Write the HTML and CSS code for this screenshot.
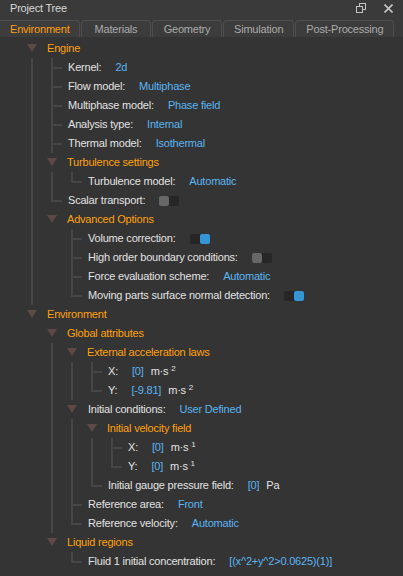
FILE: index.html
```html
<!DOCTYPE html>
<html>
<head>
<meta charset="utf-8">
<link rel="stylesheet" href="styles.css">
</head>
<body>
<div class="panel">
  <div class="titlebar">
    <span class="title">Project Tree</span>
    <div class="tools">
      <svg class="ico-float" width="10" height="10" viewBox="0 0 10 10"><rect x="3.5" y="0.5" width="6" height="6" fill="none" stroke="#c4c4c4"/><rect x="0.5" y="3.5" width="6" height="6" fill="#3a3a3a" stroke="#c4c4c4"/></svg>
      <svg class="ico-close" width="9" height="9" viewBox="0 0 9 9"><path d="M0.5 0.5 L8.5 8.5 M8.5 0.5 L0.5 8.5" stroke="#c4c4c4" stroke-width="1.6"/></svg>
    </div>
  </div>
  <div class="tabbar">
    <div class="tab active">Environment</div>
    <div class="tab">Materials</div>
    <div class="tab">Geometry</div>
    <div class="tab">Simulation</div>
    <div class="tab">Post-Processing</div>
  </div>
  <div class="tree">
    <div class="row"><i class="c a"></i><span class="grp">Engine</span></div>
    <div class="row"><i class="c v"></i><i class="c t"></i><span class="lbl">Kernel:</span><span class="val">2d</span></div>
    <div class="row"><i class="c v"></i><i class="c t"></i><span class="lbl">Flow model:</span><span class="val">Multiphase</span></div>
    <div class="row"><i class="c v"></i><i class="c t"></i><span class="lbl">Multiphase model:</span><span class="val">Phase field</span></div>
    <div class="row"><i class="c v"></i><i class="c t"></i><span class="lbl">Analysis type:</span><span class="val">Internal</span></div>
    <div class="row"><i class="c v"></i><i class="c t"></i><span class="lbl">Thermal model:</span><span class="val">Isothermal</span></div>
    <div class="row"><i class="c v"></i><i class="c a"></i><span class="grp">Turbulence settings</span></div>
    <div class="row"><i class="c v"></i><i class="c v"></i><i class="c e"></i><span class="lbl">Turbulence model:</span><span class="val">Automatic</span></div>
    <div class="row"><i class="c v"></i><i class="c e"></i><span class="lbl">Scalar transport:</span><span class="tg off"></span></div>
    <div class="row"><i class="c v"></i><i class="c a"></i><span class="grp">Advanced Options</span></div>
    <div class="row"><i class="c v"></i><i class="c"></i><i class="c t"></i><span class="lbl">Volume correction:</span><span class="tg on"></span></div>
    <div class="row"><i class="c v"></i><i class="c"></i><i class="c t"></i><span class="lbl">High order boundary conditions:</span><span class="tg off"></span></div>
    <div class="row"><i class="c v"></i><i class="c"></i><i class="c t"></i><span class="lbl">Force evaluation scheme:</span><span class="val">Automatic</span></div>
    <div class="row"><i class="c v"></i><i class="c"></i><i class="c e"></i><span class="lbl">Moving parts surface normal detection:</span><span class="tg on"></span></div>
    <div class="row"><i class="c a"></i><span class="grp">Environment</span></div>
    <div class="row"><i class="c"></i><i class="c a"></i><span class="grp">Global attributes</span></div>
    <div class="row"><i class="c"></i><i class="c v"></i><i class="c a"></i><span class="grp">External acceleration laws</span></div>
    <div class="row"><i class="c"></i><i class="c v"></i><i class="c v"></i><i class="c t"></i><span class="lbl">X:</span><span class="val">[0]</span><span class="unit">m·s<sup class="exp"><b class="neg">-</b>2</sup></span></div>
    <div class="row"><i class="c"></i><i class="c v"></i><i class="c v"></i><i class="c e"></i><span class="lbl">Y:</span><span class="val">[-9.81]</span><span class="unit">m·s<sup class="exp"><b class="neg">-</b>2</sup></span></div>
    <div class="row"><i class="c"></i><i class="c v"></i><i class="c a"></i><span class="lbl">Initial conditions:</span><span class="val">User Defined</span></div>
    <div class="row"><i class="c"></i><i class="c v"></i><i class="c v"></i><i class="c a"></i><span class="grp">Initial velocity field</span></div>
    <div class="row"><i class="c"></i><i class="c v"></i><i class="c v"></i><i class="c v"></i><i class="c t"></i><span class="lbl">X:</span><span class="val">[0]</span><span class="unit">m·s<sup class="exp"><b class="neg">-</b>1</sup></span></div>
    <div class="row"><i class="c"></i><i class="c v"></i><i class="c v"></i><i class="c v"></i><i class="c e"></i><span class="lbl">Y:</span><span class="val">[0]</span><span class="unit">m·s<sup class="exp"><b class="neg">-</b>1</sup></span></div>
    <div class="row"><i class="c"></i><i class="c v"></i><i class="c v"></i><i class="c e"></i><span class="lbl">Initial gauge pressure field:</span><span class="val">[0]</span><span class="unit">Pa</span></div>
    <div class="row"><i class="c"></i><i class="c v"></i><i class="c t"></i><span class="lbl">Reference area:</span><span class="val">Front</span></div>
    <div class="row"><i class="c"></i><i class="c v"></i><i class="c e"></i><span class="lbl">Reference velocity:</span><span class="val">Automatic</span></div>
    <div class="row"><i class="c"></i><i class="c a"></i><span class="grp">Liquid regions</span></div>
    <div class="row"><i class="c"></i><i class="c"></i><i class="c e"></i><span class="lbl">Fluid 1 initial concentration:</span><span class="val">[(x^2+y^2&gt;0.0625)(1)]</span></div>
  </div>
</div>
</body>
</html>
```

FILE: styles.css
```css
html, body {
  margin: 0;
  padding: 0;
  background: #343434;
}
body {
  width: 403px;
  height: 576px;
  overflow: hidden;
  font-family: "Liberation Sans", Arial, sans-serif;
  font-size: 11px;
  letter-spacing: -0.2px;
  color: #e2e2e2;
}
.panel {
  display: flex;
  flex-direction: column;
  height: 576px;
}
.titlebar {
  height: 16px;
  line-height: 16px;
  background: #3a3a3a;
  display: flex;
  align-items: center;
  justify-content: space-between;
  padding: 0 10px;
}
.title {
  color: #d8d8d8;
}
.tools {
  display: flex;
  align-items: center;
  gap: 18px;
}
.ico-float {
  display: block;
}
.ico-close {
  display: block;
  margin-top: 1px;
}
.tabbar {
  background: #3a3a3a;
  padding-top: 4px;
  display: flex;
  gap: 1px;
  height: 17px;
}
.tab {
  box-sizing: border-box;
  height: 17px;
  line-height: 16px;
  min-width: 70px;
  padding: 0 10px;
  text-align: center;
  color: #ababab;
  background: #3c3c3c;
  border: 1px solid #4e4e4e;
  border-bottom: none;
  border-radius: 4px 4px 0 0;
}
.tab.active {
  color: #ff9f0a;
  background: #3d3d3d;
  border-left: none;
  border-top-left-radius: 0;
  width: 80px;
}
.tree {
  padding: 2px 0 0 22px;
}
.row {
  display: flex;
  align-items: center;
  height: 19px;
  line-height: 19px;
  white-space: nowrap;
}
.c {
  display: block;
  flex: 0 0 20px;
  width: 20px;
  height: 19px;
  background-repeat: no-repeat;
}
.v {
  background-image: linear-gradient(#464646, #464646);
  background-position: 9px 0;
  background-size: 2px 19px;
}
.t {
  background-image: linear-gradient(#464646, #464646), linear-gradient(#464646, #464646);
  background-position: 9px 0, 9px 9px;
  background-size: 2px 19px, 11px 2px;
}
.e {
  background-image: linear-gradient(#464646, #464646), linear-gradient(#464646, #464646);
  background-position: 9px 0, 9px 9px;
  background-size: 2px 11px, 11px 2px;
}
.a::before {
  content: "";
  display: block;
  width: 0;
  height: 0;
  margin: 5px 0 0 5px;
  border-left: 5px solid transparent;
  border-right: 5px solid transparent;
  border-top: 8px solid #5e4944;
}
.grp {
  color: #ffa10d;
  padding-left: 5px;
}
.lbl {
  color: #e2e2e2;
  padding-left: 6px;
}
.val {
  color: #5ab4f2;
  margin-left: 14px;
}
.unit {
  color: #e2e2e2;
  margin-left: 7px;
}
.exp {
  font-size: 8px;
  line-height: 0;
  vertical-align: 4px;
  margin-left: 1px;
}
.neg {
  font-weight: normal;
  color: #7a6f8c;
  font-size: 6px;
}
.tg {
  width: 20px;
  height: 10px;
  margin-left: 14px;
  border-radius: 2px;
  background: #262626;
  display: flex;
}
.tg::before {
  content: "";
  display: block;
  width: 10px;
  height: 10px;
  border-radius: 2px;
}
.tg.off::before {
  background: #676767;
}
.tg.on {
  justify-content: flex-end;
}
.tg.on::before {
  background: #3596d6;
}
```
